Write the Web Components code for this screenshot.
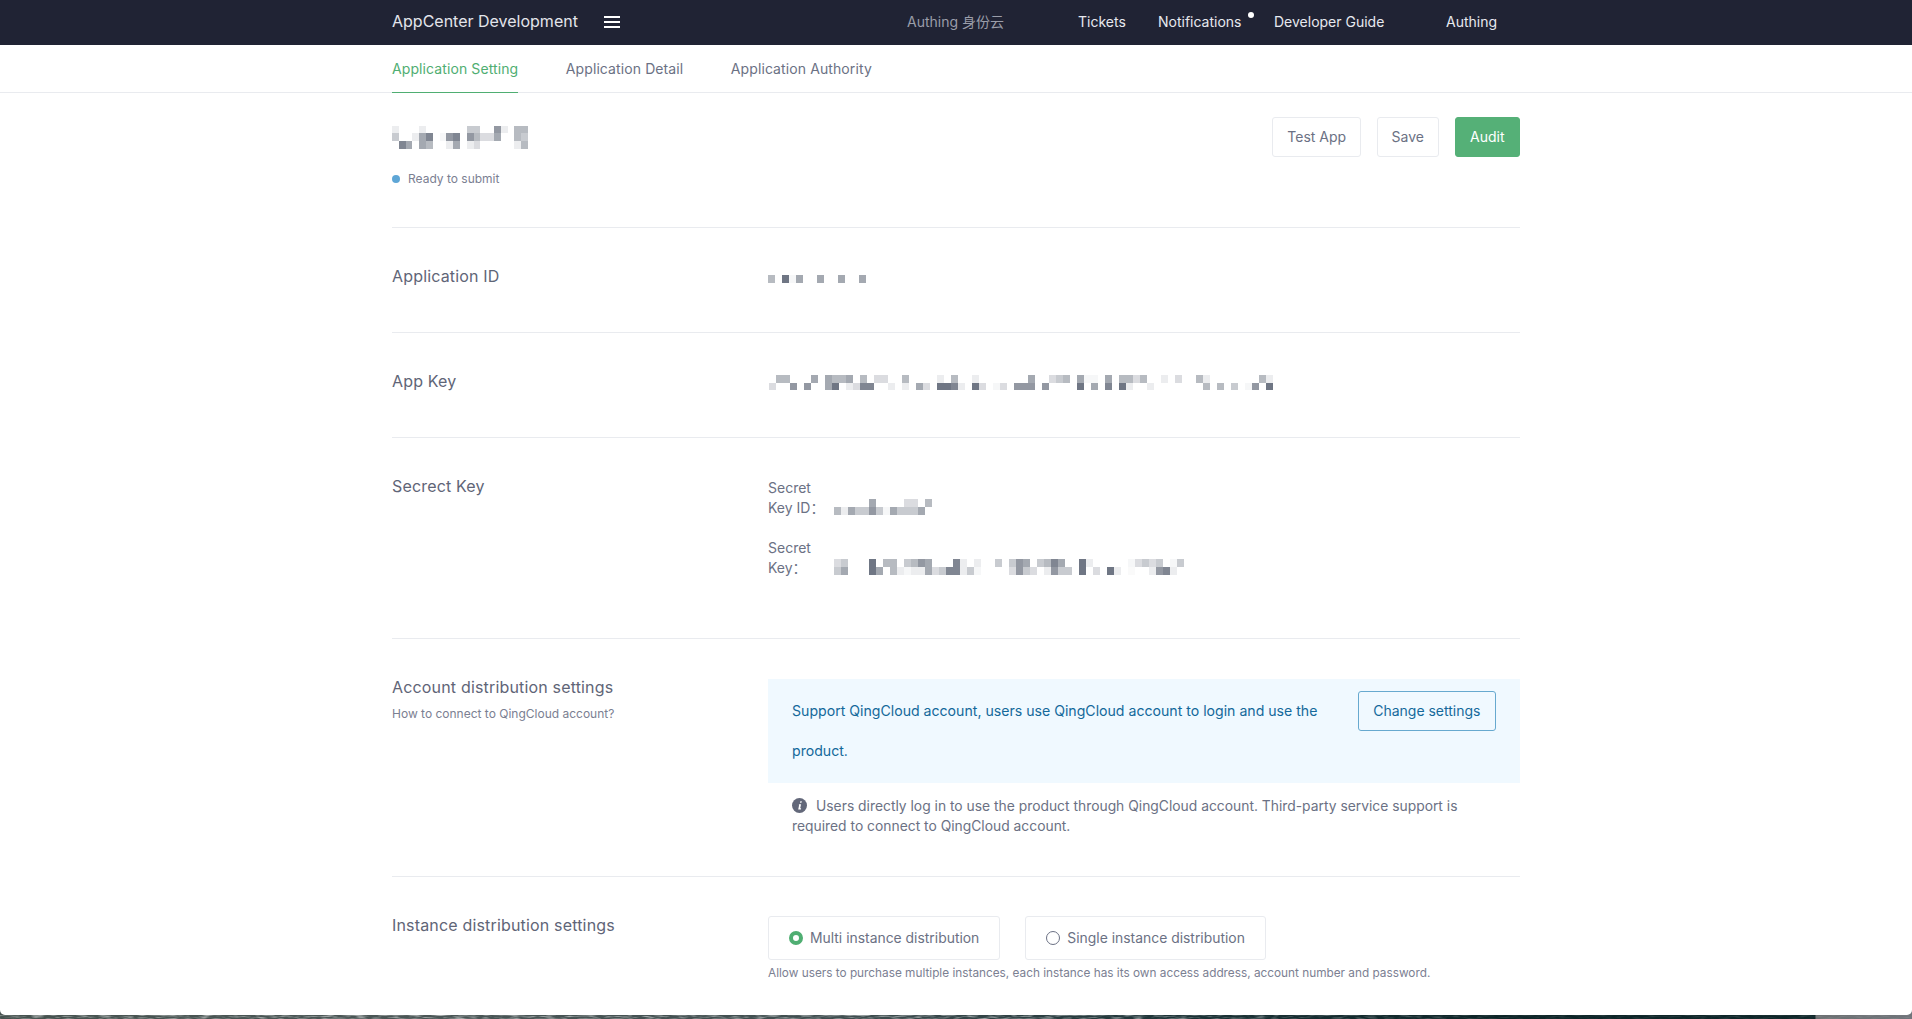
<!DOCTYPE html>
<html lang="en">
<head>
<meta charset="utf-8">
<title>AppCenter Development</title>
<style>
  html, body { margin: 0; height: 100%; overflow: hidden; }
  body { font-family: Inter, "Noto Sans CJK SC", sans-serif; color: #6b7184; background: #fff; }
</style>
</head>
<body>
<app-shell>
  <top-bar></top-bar>
  <tab-bar></tab-bar>
  <page-head></page-head>

  <setting-row label="Application ID" style="height:105px">
    <pixel-mask cols="14" cell-h="8" style="margin-top:47px" data-rows="0:4 2:8 3:.5 4:5 7:5 10:5 13:5"></pixel-mask>
  </setting-row>

  <setting-row label="App Key" style="height:105px">
    <pixel-mask cols="72" cell-h="7.5" style="margin-top:42px;margin-left:1px"
      data-rows="1:4 2:4 6:5 8:5 9:4 10:4 11:5 13:4 15:2 16:2 19:4 24:1 26:4 29:1 37:5 40:2 41:3 42:4 44:5 45:.5 46:.5 48:5 50:4 51:4 52:2 53:4 56:1 58:2 61:4 62:1 70:4 71:1|0:2 3:6 5:6 8:5 9:8 11:1 12:2 13:7 14:7 17:1 19:1 21:5 22:2 24:8 25:8 26:7 27:1 29:8 30:2 32:.5 33:2 35:6 36:6 37:6 39:6 44:8 46:5 48:7 50:8 51:1 54:1 62:4 64:4 66:3 68:.5 69:6 71:8"></pixel-mask>
  </setting-row>

  <setting-row label="Secrect Key" style="height:201px">
    <secret-line label="Secret Key ID：" style="margin-top:40px">
      <pixel-mask cols="14" cell-h="8" style="margin-top:21px"
        data-rows="5:5 10:2 11:2 13:4|0:4 1:1 2:5 3:3 4:3 5:6 6:3 7:.5 8:5 9:3 10:3 11:3 12:5"></pixel-mask>
    </secret-line>
    <secret-line label="Secret Key：" style="margin-top:20px">
      <pixel-mask cols="50" cell-h="8" style="margin-top:21px"
        data-rows="0:2 1:3 5:8 7:4 8:4 10:3 11:4 12:6 13:5 17:7 18:1 20:1 23:3 25:3 26:6 27:5 29:3 30:4 31:7 32:5 35:8 36:1 42:.5 43:2 44:3 45:2 46:3 48:.5 49:3|0:3 1:5 5:8 6:5 8:4 9:1 10:.5 11:1 12:1 13:5 14:2 15:3 16:7 17:7 18:1 19:3 20:.5 25:2 26:6 27:3 28:2 30:1 31:6 32:3 33:3 35:8 37:2 39:8 40:1 42:.3 45:1 46:6 47:7 48:1"></pixel-mask>
    </secret-line>
  </setting-row>

  <setting-row label="Account distribution settings" hint="How to connect to QingCloud account?" style="height:238px">
    <info-alert>
      Support QingCloud account, users use QingCloud account to login and use the product.
      <ui-button slot="action" kind="info">Change settings</ui-button>
    </info-alert>
    <info-note>Users directly log in to use the product through QingCloud account. Third-party service support is required to connect to QingCloud account.</info-note>
  </setting-row>

  <setting-row label="Instance distribution settings" last>
    <radio-group>
      <radio-card checked>Multi instance distribution</radio-card>
      <radio-card>Single instance distribution</radio-card>
    </radio-group>
    <field-desc>Allow users to purchase multiple instances, each instance has its own access address, account number and password.</field-desc>
  </setting-row>
</app-shell>

<script>
// tiny base so each element only declares its template
class ShadowEl extends HTMLElement {
  static get cache() {
    this._cache = this._cache || {};
    return this._cache;
  }

  constructor() {
    super();
    let template = this.constructor.cache[this.constructor.name];
    if (!template) {
      template = document.createElement('template');
      template.innerHTML = this.constructor.template;
      this.constructor.cache[this.constructor.name] = template;
    }
    this.root = this.attachShadow({ mode: 'open' });
    this.root.appendChild(template.content.cloneNode(true));
  }
}

class AppShell extends ShadowEl {
  static get template() {
    return `
      <style>
        :host {
          display: flex;
          flex-direction: column;
          height: 1019px;
          background: linear-gradient(90deg, #46524f 0, #4b5656 22%, #3f4d4f 45%, #1d3337 62%, #0d2427 78%, #0f2629 94.9%, #6c7072 95%, #70747a 100%);
          overflow: hidden;
        }
        .panel {
          background: #fff;
          height: 1015px;
          border-radius: 0 0 5px 5px;
          flex: none;
          overflow: hidden;
          display: flex;
          flex-direction: column;
        }
        svg { display: block; flex: none; }
      </style>
      <div class="panel"><slot></slot></div>
      <svg width="1912" height="4">
        <defs>
          <filter id="grain" x="0" y="0" width="100%" height="100%">
            <feTurbulence type="fractalNoise" baseFrequency=".09 .7" numOctaves="2" seed="4"/>
            <feColorMatrix values="0 0 0 0 1  0 0 0 0 1  0 0 0 0 1  1.3 0 0 0 -.55"/>
          </filter>
          <linearGradient id="fade"><stop offset="0" stop-color="#fff"/><stop offset=".55" stop-color="#fff"/><stop offset=".8" stop-color="#333"/><stop offset="1" stop-color="#333"/></linearGradient>
          <mask id="fader"><rect width="1912" height="4" fill="url(#fade)"/></mask>
        </defs>
        <g mask="url(#fader)"><rect width="1912" height="4" filter="url(#grain)"/></g>
      </svg>
    `;
  }
}

class TopBar extends ShadowEl {
  static get template() {
    return `
      <style>
        :host {
          display: block;
          height: 45px;
          flex: none;
          background: #202334;
          color: #e7e9ef;
          font-size: 14px;
        }
        .inner {
          width: 1128px;
          height: 42px;
          margin-left: 392px;
          display: flex;
          align-items: center;
          white-space: nowrap;
        }
        .brand { font-size: 16px; color: #e3e5eb; }
        .menu { margin-left: 26px; margin-top: 1px; display: block; }
        .item { position: relative; }
        .muted { color: #9a9da9; }
        .dot {
          position: absolute;
          right: -12px;
          top: -1px;
          width: 6px;
          height: 6px;
          border-radius: 50%;
          background: #fff;
        }
      </style>
      <div class="inner">
        <span class="brand">AppCenter Development</span>
        <svg class="menu" width="16" height="12" viewBox="0 0 16 12"><path d="M0 1h16M0 6h16M0 11h16" stroke="#fff" stroke-width="2" fill="none"/></svg>
        <span class="item muted" style="position:absolute;left:907px">Authing 身份云</span>
        <span class="item" style="position:absolute;left:1078px">Tickets</span>
        <span class="item" style="position:absolute;left:1158px">Notifications<i class="dot"></i></span>
        <span class="item" style="position:absolute;left:1274px">Developer Guide</span>
        <span class="item" style="position:absolute;left:1446px">Authing</span>
      </div>
    `;
  }
}

class TabBar extends ShadowEl {
  static get template() {
    return `
      <style>
        :host {
          display: block;
          height: 48px;
          flex: none;
          box-sizing: border-box;
          border-bottom: 1px solid #e9ebef;
          font-size: 14px;
          letter-spacing: .1px;
        }
        .tabs {
          margin-left: 392px;
          display: flex;
          gap: 47.5px;
          height: 48px;
        }
        a {
          display: block;
          box-sizing: border-box;
          height: 48px;
          line-height: 48px;
          color: #6b7184;
        }
        a.active {
          color: #4fae72;
          border-bottom: 1px solid #4fae72;
        }
      </style>
      <div class="tabs">
        <a class="active">Application Setting</a>
        <a>Application Detail</a>
        <a>Application Authority</a>
      </div>
    `;
  }
}

class PageHead extends ShadowEl {
  static get template() {
    return `
      <style>
        :host {
          display: flex;
          flex: none;
          justify-content: space-between;
          margin: 0 392px;
          height: 134px;
          box-sizing: border-box;
          padding-top: 24px;
        }
        pixel-mask { margin-top: 8.5px; }
        .status {
          display: flex;
          align-items: center;
          gap: 8px;
          margin-top: 20.5px;
          font-size: 12px;
          line-height: 20px;
          color: #7b8092;
        }
        .status i {
          width: 8px;
          height: 8px;
          border-radius: 50%;
          background: #5ea6d6;
        }
        .actions { display: flex; gap: 15.5px; }
      </style>
      <div>
        <pixel-mask cols="20" cell-w="6.8" cell-h="7.7"
          data-rows="0:1 4:1 11:3 12:3 15:6 16:1 18:4 19:4|0:3 3:1 4:5 5:7 7:.5 8:6 9:7 11:6 12:4 13:2 14:2 15:5 18:4 19:3|1:7 2:5 4:5 5:4 8:1 9:5 11:1 12:2 18:1 19:4"></pixel-mask>
        <div class="status"><i></i>Ready to submit</div>
      </div>
      <div class="actions">
        <ui-button>Test App</ui-button>
        <ui-button>Save</ui-button>
        <ui-button kind="primary">Audit</ui-button>
      </div>
    `;
  }
}

class UiButton extends ShadowEl {
  static get template() {
    return `
      <style>
        :host {
          display: inline-block;
          box-sizing: border-box;
          height: 40px;
          padding: 0 14px;
          line-height: 38px;
          font-size: 14px;
          color: #6b7184;
          background: #fff;
          border: 1px solid #e9ebef;
          border-radius: 3px;
          white-space: nowrap;
        }
        :host([kind="primary"]) {
          background: #55b077;
          border-color: #55b077;
          color: #fff;
          padding: 0 14.5px;
        }
        :host([kind="info"]) {
          background: transparent;
          border-color: #67a9cf;
          color: #15699b;
          padding: 0 14.5px;
        }
      </style>
      <slot></slot>
    `;
  }
}

// blurred out values in the reference, drawn as a grid of grey cells
class PixelMask extends ShadowEl {
  static get template() {
    return `
      <style>
        :host { display: block; filter: blur(.4px); }
        .row { display: flex; }
        .row i { display: block; flex: none; }
      </style>
      <div class="grid"></div>
    `;
  }

  connectedCallback() {
    const cols = Number(this.getAttribute('cols'));
    const cellW = this.getAttribute('cell-w') || 7;
    const cellH = this.getAttribute('cell-h') || 8;
    const grid = this.root.querySelector('.grid');
    grid.innerHTML = '';
    this.dataset.rows.split('|').forEach((spec) => {
      const cells = {};
      spec.trim().split(/\s+/).forEach((pair) => {
        const [c, d] = pair.split(':');
        cells[c] = Number(d);
      });
      const row = document.createElement('div');
      row.className = 'row';
      for (let c = 0; c < cols; c++) {
        const cell = document.createElement('i');
        cell.style.width = cellW + 'px';
        cell.style.height = cellH + 'px';
        if (cells[c]) {
          cell.style.background = `rgba(84, 92, 108, ${(cells[c] / 9.5).toFixed(2)})`;
        }
        row.appendChild(cell);
      }
      grid.appendChild(row);
    });
  }
}

class SettingRow extends ShadowEl {
  static get template() {
    return `
      <style>
        :host {
          display: grid;
          grid-template-columns: 376px 752px;
          flex: none;
          margin: 0 392px;
          box-sizing: border-box;
          border-top: 1px solid #e9ebef;
        }
        .label {
          padding-top: 37px;
          font-size: 16px;
          letter-spacing: .17px;
          line-height: 22px;
          color: #5f6577;
        }
        .hint {
          margin-top: 5.5px;
          font-size: 12px;
          letter-spacing: 0;
          line-height: 20px;
          color: #7b8092;
        }
      </style>
      <div class="label"><span class="name"></span><div class="hint"></div></div>
      <div class="value"><slot></slot></div>
    `;
  }

  connectedCallback() {
    this.root.querySelector('.name').textContent = this.getAttribute('label');
    const hint = this.getAttribute('hint');
    const box = this.root.querySelector('.hint');
    if (hint) box.textContent = hint;
    else box.remove();
  }
}

class SecretLine extends ShadowEl {
  static get template() {
    return `
      <style>
        :host { display: flex; }
        .name {
          width: 66px;
          flex: none;
          font-size: 14px;
          line-height: 20px;
          color: #6b7184;
        }
      </style>
      <div class="name"></div>
      <slot></slot>
    `;
  }

  connectedCallback() {
    this.root.querySelector('.name').textContent = this.getAttribute('label');
  }
}

class InfoAlert extends ShadowEl {
  static get template() {
    return `
      <style>
        :host {
          display: flex;
          justify-content: space-between;
          align-items: flex-start;
          gap: 40px;
          box-sizing: border-box;
          margin-top: 40px;
          height: 104px;
          padding: 12px 24px;
          background: #f0f9ff;
          font-size: 14.12px;
          line-height: 40px;
          color: #15699b;
        }
        .text { flex: 1; }
      </style>
      <div class="text"><slot></slot></div>
      <slot name="action"></slot>
    `;
  }
}

class InfoNote extends ShadowEl {
  static get template() {
    return `
      <style>
        :host {
          display: block;
          margin: 13px 24px 0;
          font-size: 13.85px;
          line-height: 20px;
          color: #6b7184;
        }
        svg { vertical-align: -2px; margin-right: 9px; }
      </style>
      <svg width="15" height="15" viewBox="0 0 15 15"><circle cx="7.5" cy="7.5" r="7.5" fill="#63687a"/><path d="M8.3 3.2h1.5l-.3 1.5H8zM7 6.2h2.1l-.9 4.1h.9l-.2 1.2H6.2l.9-4.2h-.3z" fill="#fff"/></svg><slot></slot>
    `;
  }
}

class RadioGroup extends ShadowEl {
  static get template() {
    return `
      <style>
        :host { display: flex; gap: 25px; margin-top: 39px; }
      </style>
      <slot></slot>
    `;
  }
}

class RadioCard extends ShadowEl {
  static get template() {
    return `
      <style>
        :host {
          display: flex;
          align-items: center;
          gap: 7px;
          box-sizing: border-box;
          height: 44px;
          padding: 0 20px;
          border: 1px solid #e9ebef;
          border-radius: 3px;
          font-size: 13.9px;
          color: #6b7184;
          white-space: nowrap;
        }
        i {
          display: block;
          box-sizing: border-box;
          width: 14px;
          height: 14px;
          border-radius: 50%;
          border: 1px solid #6b7184;
          background: #fff;
        }
        :host([checked]) i { border: 4px solid #4fae72; }
      </style>
      <i></i><slot></slot>
    `;
  }
}

class FieldDesc extends ShadowEl {
  static get template() {
    return `
      <style>
        :host {
          display: block;
          margin-top: 3px;
          font-size: 11.8px;
          line-height: 20px;
          color: #7b8092;
          white-space: nowrap;
        }
      </style>
      <slot></slot>
    `;
  }
}

customElements.define('app-shell', AppShell);
customElements.define('top-bar', TopBar);
customElements.define('tab-bar', TabBar);
customElements.define('page-head', PageHead);
customElements.define('ui-button', UiButton);
customElements.define('pixel-mask', PixelMask);
customElements.define('setting-row', SettingRow);
customElements.define('secret-line', SecretLine);
customElements.define('info-alert', InfoAlert);
customElements.define('info-note', InfoNote);
customElements.define('radio-group', RadioGroup);
customElements.define('radio-card', RadioCard);
customElements.define('field-desc', FieldDesc);
</script>
</body>
</html>
